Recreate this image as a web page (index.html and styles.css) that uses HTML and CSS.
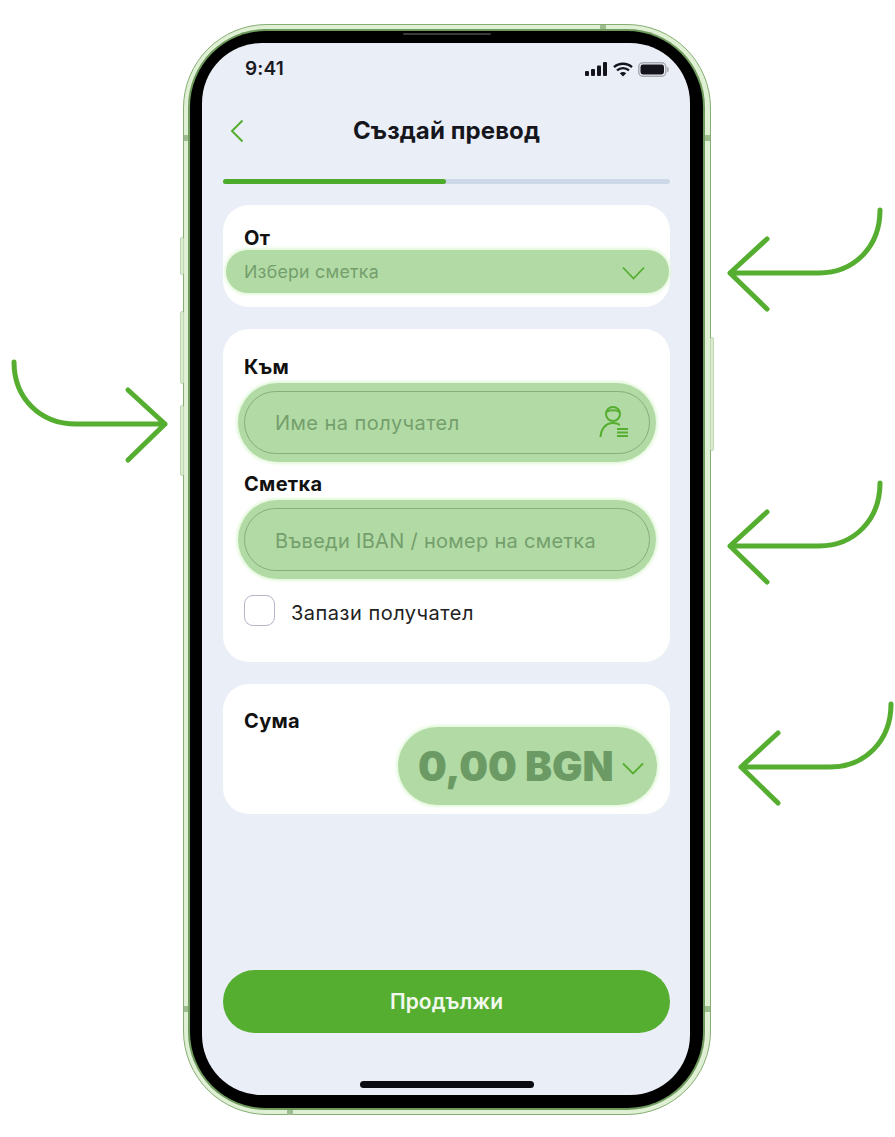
FILE: index.html
```html
<!DOCTYPE html>
<html lang="bg">
<head>
<meta charset="utf-8">
<title>Създай превод</title>
<link rel="stylesheet" href="styles.css">
</head>
<body>
<main class="stage">
  <svg class="arrow arrow-left" viewBox="0 0 170 110" width="170" height="110"><path d="M14 22C14 58 40 84 76 84H165M128 50L165 84L128 120" /></svg>
  <svg class="arrow arrow-a" viewBox="0 0 170 110" width="170" height="110"><path d="M156 5C156 42 130 68 95 68H6M43 34L6 68L43 104" /></svg>
  <svg class="arrow arrow-b" viewBox="0 0 170 110" width="170" height="110"><path d="M156 5C156 42 130 68 95 68H6M43 34L6 68L43 104" /></svg>
  <svg class="arrow arrow-c" viewBox="0 0 170 110" width="170" height="110"><path d="M156 5C156 42 130 68 95 68H6M43 34L6 68L43 104" /></svg>

  <div class="phone">
    <span class="side s1"></span><span class="side s2"></span><span class="side s3"></span><span class="side s4"></span>
    <span class="tick t-top"></span><span class="tick t-bottom"></span>
    <span class="tick t-l1"></span><span class="tick t-r1"></span><span class="tick t-l2"></span><span class="tick t-r2"></span>
    <div class="bezel">
      <span class="speaker"></span>
      <div class="screen">
        <div class="status">
          <span class="time">9:41</span>
          <div class="status-icons">
            <svg width="23" height="14" viewBox="0 0 23 14"><rect x="0" y="9" width="4" height="5" rx="1"/><rect x="6" y="7" width="4" height="7" rx="1"/><rect x="12" y="3.5" width="4" height="10.5" rx="1"/><rect x="18" y="0" width="4" height="14" rx="1"/></svg>
            <svg class="wifi" width="20" height="15" viewBox="0 0 20 15"><path d="M1 5.2C6 .6 14 .6 19 5.2M4 8.4C7.4 5.4 12.6 5.4 16 8.4" /><path class="wifi-dot" d="M10 14.5L6.8 11.2C8.6 9.7 11.4 9.7 13.2 11.2Z"/></svg>
            <svg width="31" height="15" viewBox="0 0 31 15"><rect class="batt-case" x=".75" y=".75" width="27" height="13.5" rx="4"/><rect x="2.5" y="2.5" width="23.5" height="10" rx="2.4"/><rect class="batt-cap" x="29" y="5" width="1.6" height="5" rx=".8"/></svg>
          </div>
        </div>

        <header class="nav">
          <svg class="back" width="14" height="24" viewBox="0 0 14 24"><path d="M12.5 1.5L2 12L12.5 22.5"/></svg>
          <h1>Създай превод</h1>
        </header>

        <div class="progress"><div class="progress-fill"></div></div>

        <section class="card card-from">
          <div class="label">От</div>
          <div class="select">
            <span class="ph">Избери сметка</span>
            <svg class="chev" width="23" height="14" viewBox="0 0 23 14"><path d="M1 1.5L11.5 12.5L22 1.5"/></svg>
          </div>
        </section>

        <section class="card card-to">
          <div class="label">Към</div>
          <div class="field">
            <div class="field-inner">
              <span class="ph ph-lg">Име на получател</span>
              <svg class="user" width="31" height="33" viewBox="0 0 31 33"><circle cx="14" cy="8" r="7"/><path d="M7.5 6C11 3.8 17 3.8 20.5 6M1.5 31C2 22.5 7 17.5 13 17C16 16.8 19 17.5 21 19M18 23H29M18 26.5H29M18 30H29"/></svg>
            </div>
          </div>
          <div class="label label-account">Сметка</div>
          <div class="field">
            <div class="field-inner">
              <span class="ph ph-lg ph-iban">Въведи IBAN / номер на сметка</span>
            </div>
          </div>
          <label class="save">
            <span class="check"></span>
            <span class="save-text">Запази получател</span>
          </label>
        </section>

        <section class="card card-amount">
          <div class="label">Сума</div>
          <div class="amount">
            <span class="amount-value">0,00 BGN</span>
            <svg class="chev-sm" width="22" height="13" viewBox="0 0 22 13"><path d="M1 1.5L11 11.5L21 1.5"/></svg>
          </div>
        </section>

        <button class="continue" type="button">Продължи</button>
        <div class="home"></div>
      </div>
    </div>
  </div>
</main>
</body>
</html>
```
FILE: styles.css
```css
* { box-sizing: border-box; }
html, body { margin: 0; background: #fff; }
body { font-family: Inter, "Noto Sans", sans-serif; color: #111; }

.stage { position: relative; width: 895px; height: 1137px; padding: 24px 0 0 183px; overflow: hidden; }

.arrow { position: absolute; overflow: visible; fill: none; stroke: #55ae30; stroke-width: 5; stroke-linecap: round; stroke-linejoin: round; }
.arrow-left { left: 0; top: 340px; }
.arrow-a { left: 724px; top: 205px; }
.arrow-b { left: 724px; top: 478px; }
.arrow-c { left: 735px; top: 699px; }

.phone {
  position: relative;
  width: 528px; height: 1091px;
  padding: 6px 7px 6px 6px;
  border-radius: 84px;
  background: #dff0d5;
  border: 1.5px solid #86ad74;
}
.side { position: absolute; width: 4px; background: #d9ecce; border: 1px solid #c0d8b4; border-radius: 2px; }
.s1 { left: -4px; top: 212px; height: 38px; }
.s2 { left: -4px; top: 286px; height: 73px; }
.s3 { left: -4px; top: 380px; height: 71px; }
.s4 { right: -4px; top: 312px; height: 114px; }
.tick { position: absolute; background: #9dbd8f; }
.t-top { left: 416px; top: 0; width: 6px; height: 6px; }
.t-bottom { left: 103px; bottom: -1px; width: 6px; height: 7px; }
.t-l1 { left: 0; top: 110px; width: 6px; height: 6px; }
.t-r1 { right: 0; top: 110px; width: 6px; height: 6px; }
.t-l2 { left: 0; top: 981px; width: 6px; height: 6px; }
.t-r2 { right: 0; top: 981px; width: 6px; height: 6px; }

.bezel {
  position: relative;
  height: 100%;
  padding: 12px 13px 13px 12px;
  background: #000;
  border-radius: 76px;
  box-shadow: 0 0 0 2px #6f9a5d;
}
.speaker { position: absolute; left: 213px; top: 2px; width: 88px; height: 2px; background: #3a3a3a; border-radius: 1px; }

.screen {
  display: flex; flex-direction: column;
  height: 100%;
  padding: 0 20px 7px 21px;
  background: #eaeef7;
  border-radius: 60px;
}

.status { height: 50px; display: flex; align-items: center; justify-content: space-between; padding: 0 1px 0 22px; flex: none; }
.time { font-size: 19px; font-weight: 600; letter-spacing: .2px; color: #1a1a22; }
.status-icons { display: flex; align-items: center; gap: 5px; fill: #14141c; margin-top: 2px; }
.wifi { fill: none; stroke: #14141c; stroke-width: 2.3; }
.wifi-dot { fill: #14141c; stroke: none; }
.batt-case { fill: #eaeef7; stroke: #a9aab0; stroke-width: 1.5; }
.batt-cap { fill: #a9aab0; }

.nav { position: relative; height: 46px; margin-top: 15px; display: flex; align-items: center; justify-content: center; flex: none; }
.nav h1 { margin: -2px 0 0; font-size: 24px; font-weight: 700; color: #16161d; letter-spacing: .1px; }
.back { position: absolute; left: 7px; top: 11px; fill: none; stroke: #55ae30; stroke-width: 2; }

.progress { height: 5px; margin-top: 25px; border-radius: 3px; background: #ccd8e8; flex: none; }
.progress-fill { width: 223px; height: 100%; border-radius: 3px; background: #4dab2b; }

.card { background: #fff; border-radius: 26px; flex: none; }
.label { font-size: 20px; line-height: 22px; font-weight: 700; letter-spacing: .3px; color: #111; margin-left: 21px; }

.card-from { height: 102px; margin-top: 21px; padding: 22px 1px 0 3px; }
.card-from .label { margin-left: 18px; }
.select {
  display: flex; align-items: center; justify-content: space-between;
  height: 43px; margin-top: 1px;
  padding: 0 25px 0 18px;
  background: #b2daa5; border-radius: 22px;
  box-shadow: 0 0 3px 2px #e4f8dc;
}
.ph { font-size: 17.75px; color: #749f6c; letter-spacing: .25px; }
.ph-lg { font-size: 20px; letter-spacing: .45px; margin-top: 1px; }
.ph-iban { letter-spacing: .3px; margin-top: 2px; }
.chev { margin-top: 2px; margin-right: -1px; fill: none; stroke: #55ae30; stroke-width: 1.8; }

.card-to { height: 333px; margin-top: 22px; padding-top: 27px; }
.label-account { margin-top: 11px; }
.field {
  height: 79px; margin: 5px 14px 0 15px; padding: 8px 6px;
  background: #b2daa5; border-radius: 40px;
  box-shadow: 0 0 3px 2px #e4f8dc;
}
.field-inner {
  display: flex; align-items: center; justify-content: space-between;
  height: 63px; padding: 0 19px 0 30px;
  border: 1.5px solid #85ae7c; border-radius: 32px;
}
.user { fill: none; stroke: #55ae30; stroke-width: 2; }
.save { display: flex; align-items: center; gap: 16px; margin: 16px 0 0 21px; font-size: 20px; letter-spacing: .5px; color: #222; }
.save-text { margin-top: 4px; }
.check { width: 31px; height: 31px; background: #fff; border: 1.5px solid #b3b5c9; border-radius: 9px; }

.card-amount { display: flex; flex-direction: column; height: 130px; margin-top: 22px; padding-top: 26px; }
.amount {
  align-self: flex-end;
  display: flex; align-items: center; gap: 8px;
  width: 259px; height: 78px; margin: -5px 13px 0 0; padding: 0 13px 0 20px;
  background: #b2daa5; border-radius: 39px;
  box-shadow: 0 0 3px 2px #e4f8dc;
}
.amount-value { font-size: 40.5px; font-weight: 900; letter-spacing: 0; color: #6b9a64; white-space: nowrap; }
.chev-sm { fill: none; stroke: #55ae30; stroke-width: 1.8; margin-top: 4px; flex: none; }

.continue {
  display: block; width: 100%; height: 63px; margin-top: auto;
  border: 0; border-radius: 32px;
  background: #55ae30; color: #f2f8ee;
  font: 600 21px Inter, "Noto Sans", sans-serif;
  letter-spacing: .1px;
  flex: none;
}
.home { width: 174px; height: 7px; margin: 48px auto 0; background: #0b0b12; border-radius: 4px; flex: none; }
```
